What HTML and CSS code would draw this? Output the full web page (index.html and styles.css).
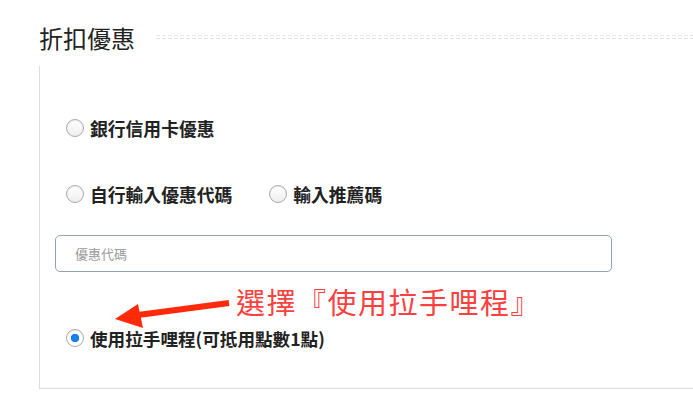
FILE: index.html
```html
<!DOCTYPE html>
<html lang="zh-Hant">
<head>
    <meta charset="UTF-8">
    <meta name="viewport" content="width=device-width, initial-scale=1.0">
    <title>折扣優惠</title>
    <link rel="stylesheet" href="styles.css">
</head>
<body>
    <div class="section">
        <!-- Heading -->
        <div class="section-head">
            <h2 class="title">折扣優惠</h2>
            <div class="dash-line"></div>
        </div>

        <!-- Discount options -->
        <div class="box">
            <label class="option row-bank">
                <input type="radio" name="discount">
                <span>銀行信用卡優惠</span>
            </label>

            <div class="row-code">
                <label class="option">
                    <input type="radio" name="discount">
                    <span>自行輸入優惠代碼</span>
                </label>
                <label class="option option-ref">
                    <input type="radio" name="discount">
                    <span>輸入推薦碼</span>
                </label>
            </div>

            <input class="code-input" type="text" placeholder="優惠代碼">

            <label class="option row-miles">
                <input type="radio" name="discount" checked>
                <span>使用拉手哩程(可抵用點數1點)</span>
            </label>

            <!-- Annotation -->
            <div class="note">選擇『使用拉手哩程』</div>
            <svg class="note-arrow" width="140" height="40" viewBox="0 0 140 40">
                <line x1="129" y1="8" x2="38" y2="20" stroke="#ff2a0a" stroke-width="6"/>
                <polygon points="15,24 38,9 43,33" fill="#ff2a0a"/>
            </svg>
        </div>
    </div>
</body>
</html>
```

FILE: styles.css
```css
body {
    margin: 0;
    padding: 0;
    background: #fff;
    font-family: "Noto Sans CJK TC", "Noto Sans", sans-serif;
    color: #222;
}
.section {
    padding: 23px 0 0 39px;
}
.section-head {
    display: flex;
    align-items: center;
    gap: 21px;
}
.title {
    margin: 0;
    font-size: 24px;
    font-weight: 400;
    line-height: 30px;
    color: #222;
}
.dash-line {
    flex: 1;
    height: 4px;
    margin-top: -3px;
    background-image:
        repeating-linear-gradient(90deg, #e4e4e4 0 4px, transparent 4px 6px),
        repeating-linear-gradient(90deg, #e4e4e4 0 4px, transparent 4px 6px);
    background-size: 100% 1px, 100% 1px;
    background-position: 0 0, 0 100%;
    background-repeat: no-repeat;
}
.box {
    position: relative;
    margin-top: 13px;
    padding: 50px 0 38px 15px;
    border-left: 1px solid #dcdcdc;
    border-bottom: 1px solid #dcdcdc;
    display: flex;
    flex-direction: column;
    align-items: flex-start;
}
.option {
    display: flex;
    align-items: center;
    gap: 6px;
    height: 24px;
    font-size: 17.8px;
    font-weight: 700;
    color: #222;
    cursor: pointer;
}
.option input {
    appearance: none;
    -webkit-appearance: none;
    margin: 0;
    width: 18px;
    height: 18px;
    border-radius: 50%;
    border: 1px solid #aaa;
    background: linear-gradient(#fff, #eee);
    box-shadow: inset 0 1px 1px rgba(0, 0, 0, 0.08);
}
.option input:checked {
    background: radial-gradient(circle, #1a7ff2 0 4px, #fff 4.5px);
    border-color: #a8a8a8;
}
.row-bank {
    margin-left: 11px;
}
.row-code {
    display: flex;
    gap: 37px;
    margin: 42px 0 0 11px;
}
.code-input {
    box-sizing: border-box;
    width: 557px;
    height: 37px;
    margin-top: 29px;
    padding: 0 19px;
    border: 1px solid #8fa2b6;
    border-radius: 5px;
    font-family: "Noto Sans CJK TC", sans-serif;
    font-size: 13px;
    color: #333;
    outline: none;
}
.code-input::placeholder {
    color: #9a9a9a;
}
.row-miles {
    margin: 54px 0 0 11px;
    font-size: 17.6px;
}
.note {
    position: absolute;
    left: 196px;
    top: 218px;
    font-size: 29px;
    letter-spacing: 1.5px;
    line-height: 34px;
    color: #fb4040;
    white-space: nowrap;
}
.note-arrow {
    position: absolute;
    left: 60px;
    top: 229px;
}
```
